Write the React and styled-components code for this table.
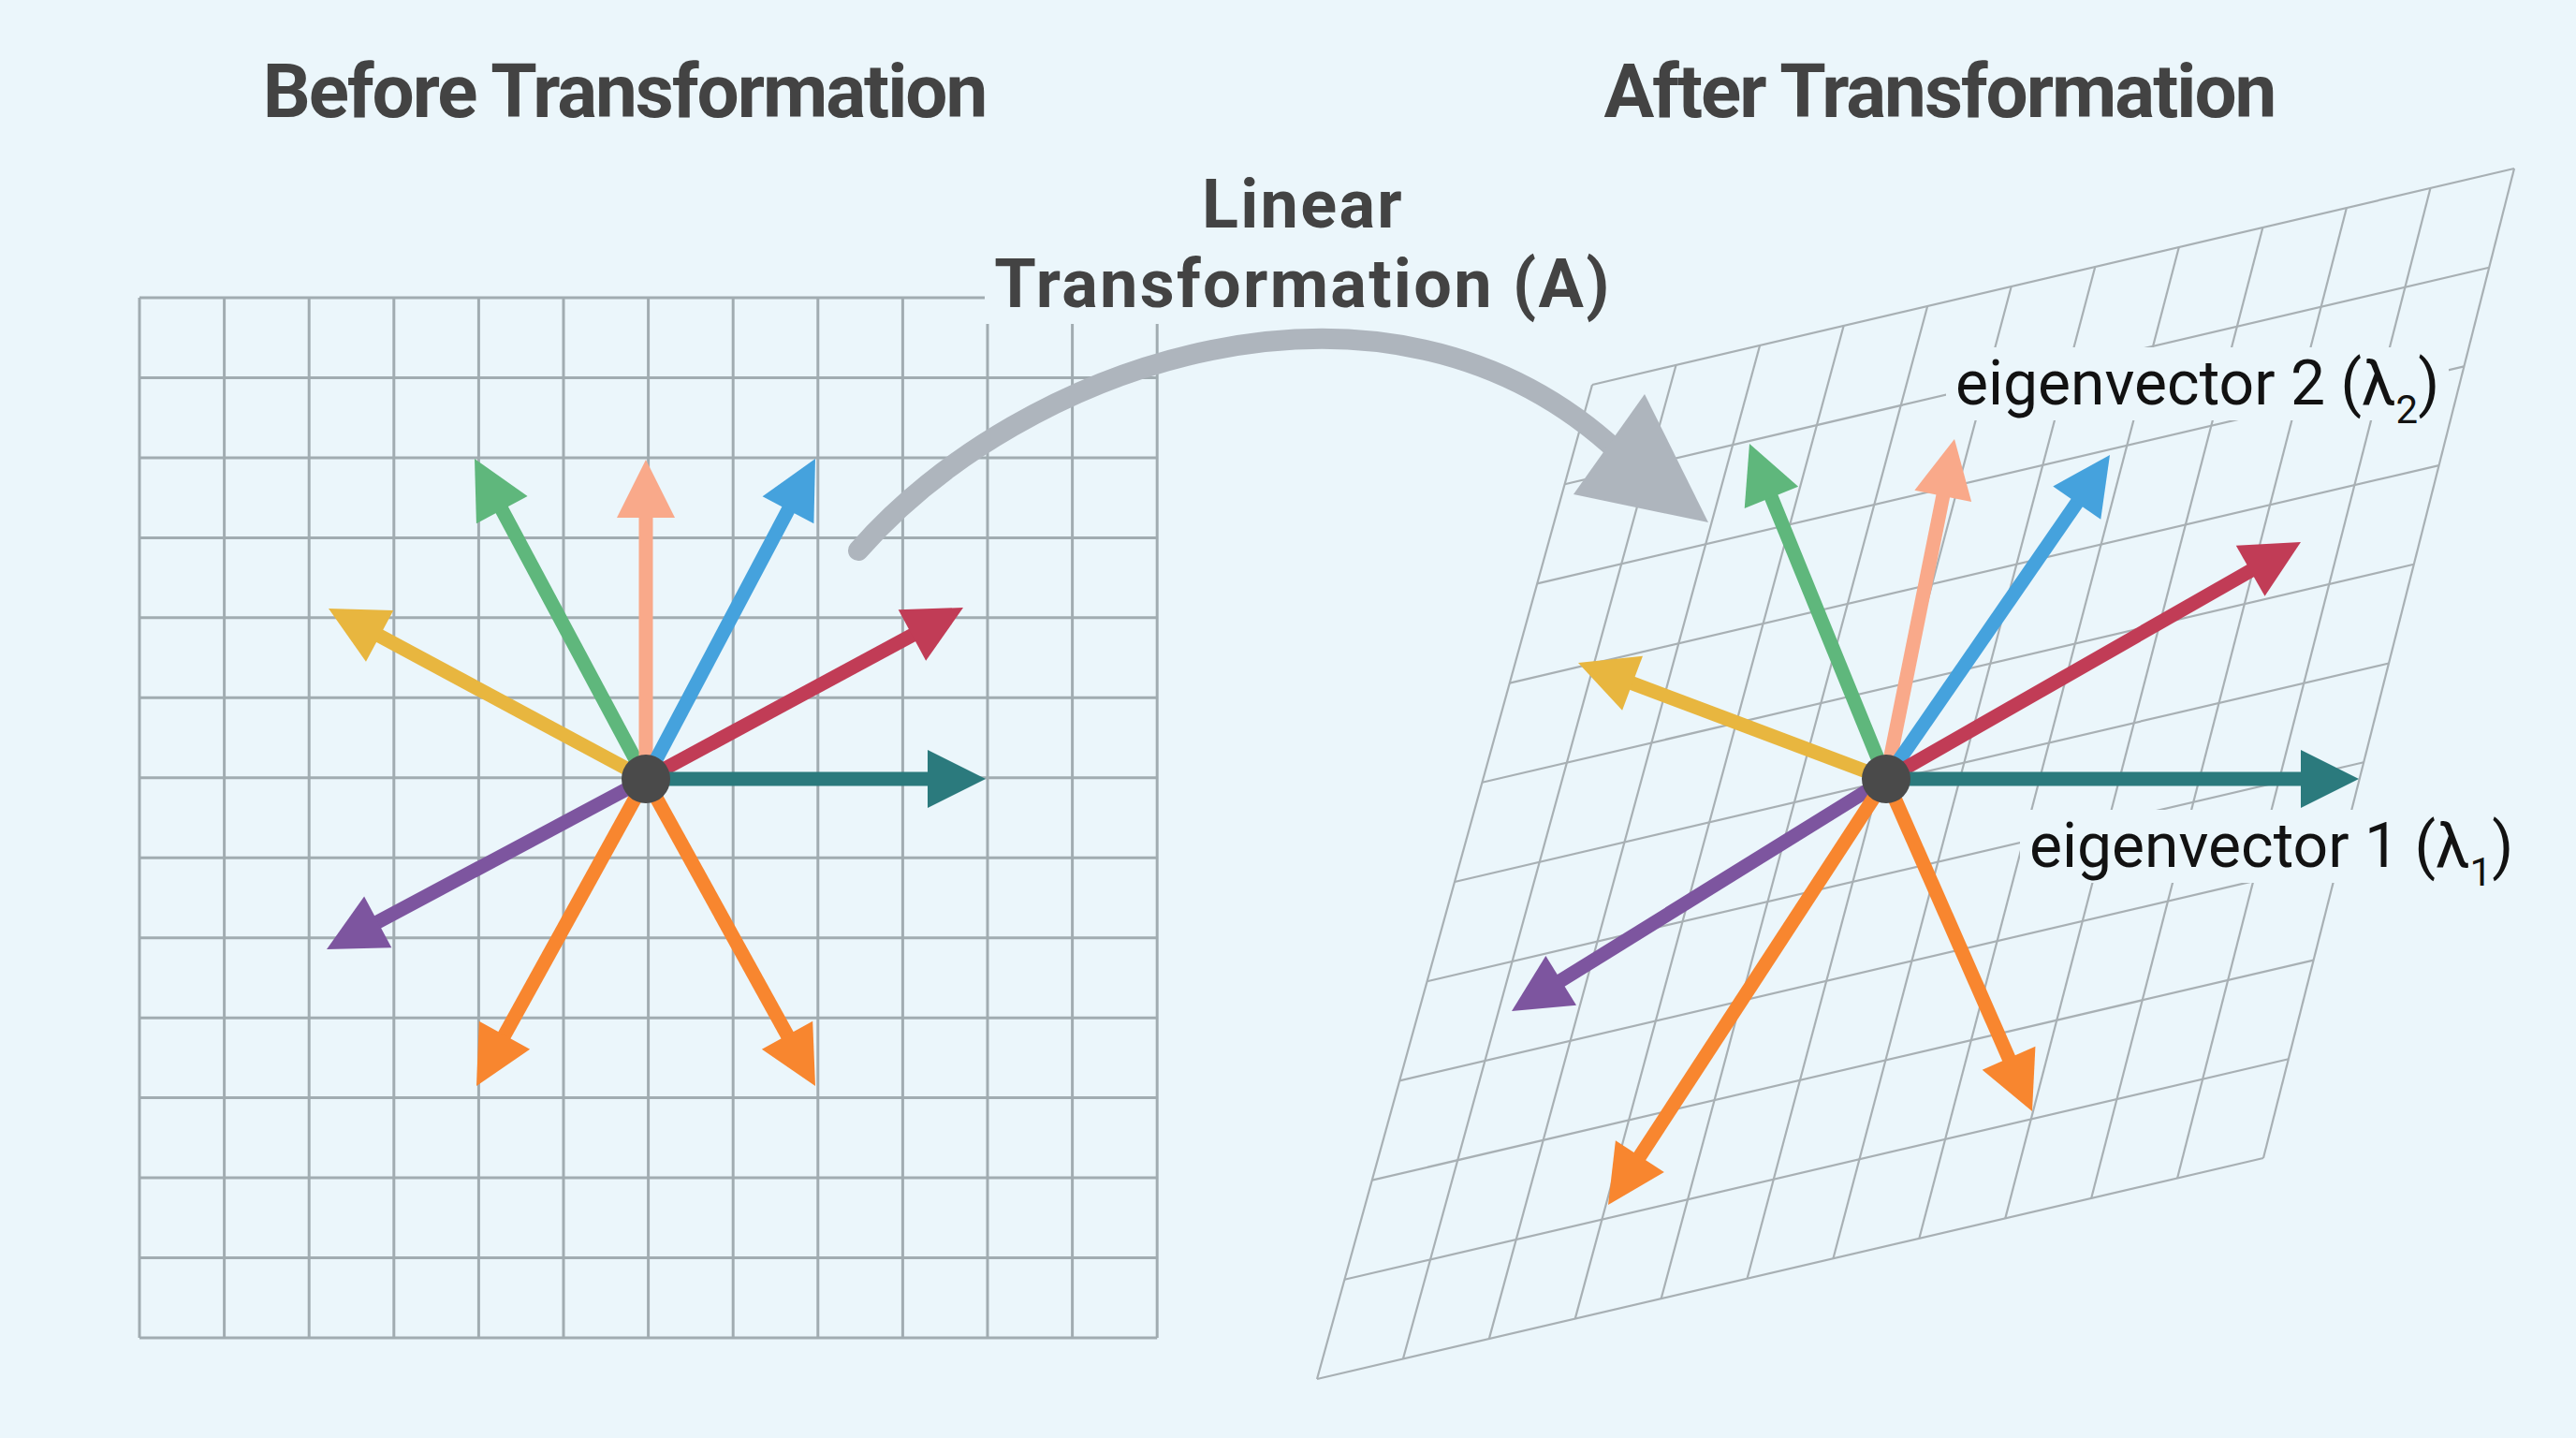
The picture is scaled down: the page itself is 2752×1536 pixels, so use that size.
import React from 'react'
import styled, { createGlobalStyle } from 'styled-components'

const BG = '#ebf6fb'
const TOP = 160

const GlobalStyle = createGlobalStyle`
  html, body {
    margin: 0;
    padding: 0;
    background: ${BG};
  }
  body {
    font-family: Roboto, 'Liberation Sans', sans-serif;
    overflow: hidden;
  }
`

const Page = styled.div`
  width: 2752px;
  height: 1536px;
  display: flex;
  flex-direction: column;
  background: ${BG};
`

const Header = styled.header`
  display: grid;
  grid-template-columns: 1334px 1fr;
  height: ${TOP}px;
  padding-top: 58px;
  box-sizing: border-box;
`

const Title = styled.h1`
  margin: 0;
  padding-left: ${p => p.$shift || 0}px;
  font-family: Roboto, 'Liberation Sans', sans-serif;
  font-size: 80px;
  line-height: 80px;
  font-weight: 700;
  letter-spacing: -2px;
  color: #434343;
  text-align: center;
`

const Canvas = styled.div`
  position: relative;
  flex: 1;
`

const Drawing = styled.svg`
  position: absolute;
  inset: 0;
  width: 100%;
  height: 100%;
  display: block;
`

const Caption = styled.div`
  position: absolute;
  left: ${p => p.$x}px;
  top: ${p => p.$y}px;
  width: 680px;
  background: ${BG};
  font-size: 72px;
  line-height: 85px;
  font-weight: 700;
  letter-spacing: 2.3px;
  color: #434343;
  text-align: center;
`

const EigenLabel = styled.div`
  position: absolute;
  left: ${p => p.$x}px;
  top: ${p => p.$y}px;
  padding: 6px 10px;
  background: ${BG};
  font-size: 66px;
  line-height: 66px;
  font-weight: 400;
  color: #121212;
  white-space: nowrap;
`

const Sub = styled.sub`
  font-size: 42px;
  line-height: 0;
  vertical-align: -20px;
`

// vectors measured in page pixels
const LEFT_C = [690, 832]
const RIGHT_C = [2015, 832]

const COLORS = {
  green: '#5fb77c',
  salmon: '#f9a98a',
  blue: '#45a2dd',
  yellow: '#e8b63f',
  red: '#c13c56',
  teal: '#2b7a7d',
  purple: '#7d559f',
  orange: '#f8862f',
}

const leftVectors = [
  ['yellow', [351, 650]],
  ['green', [507, 490]],
  ['salmon', [690, 491]],
  ['blue', [871, 490]],
  ['red', [1029, 649]],
  ['teal', [1053, 832]],
  ['purple', [349, 1014]],
  ['orange', [509, 1160]],
  ['orange', [871, 1160]],
]

const rightVectors = [
  ['yellow', [1686, 708]],
  ['green', [1869, 474]],
  ['salmon', [2088, 469]],
  ['blue', [2254, 486]],
  ['red', [2458, 579]],
  ['teal', [2520, 832]],
  ['purple', [1615, 1080]],
  ['orange', [1718, 1287]],
  ['orange', [2171, 1187]],
]

const Arrow = ({ from, to, color, width = 15, head = 62, half = 31 }) => {
  const dx = to[0] - from[0]
  const dy = to[1] - from[1]
  const len = Math.hypot(dx, dy)
  const ux = dx / len
  const uy = dy / len
  const bx = to[0] - ux * head
  const by = to[1] - uy * head
  const px = -uy
  const py = ux
  const pts = `${to[0]},${to[1]} ${bx + px * half},${by + py * half} ${bx - px * half},${by - py * half}`
  return (
    <g>
      <line x1={from[0]} y1={from[1]} x2={bx + ux * 4} y2={by + uy * 4} stroke={color} strokeWidth={width} />
      <polygon points={pts} fill={color} />
    </g>
  )
}

const FlatGrid = () => {
  const x0 = 149
  const y0 = 318
  const dx = 90.6
  const dy = 85.46
  const x1 = x0 + dx * 12
  const y1 = y0 + dy * 13
  const lines = []
  for (let i = 0; i <= 12; i++) {
    lines.push(<line key={'v' + i} x1={x0 + i * dx} y1={y0} x2={x0 + i * dx} y2={y1} />)
  }
  for (let j = 0; j <= 13; j++) {
    lines.push(<line key={'h' + j} x1={x0} y1={y0 + j * dy} x2={x1} y2={y0 + j * dy} />)
  }
  return <g stroke="#a1acb1" strokeWidth="3">{lines}</g>
}

const SkewGrid = () => {
  const TL = [1701, 411]
  const TR = [2686, 180]
  const BR = [2418, 1237]
  const BL = [1407, 1473]
  const at = (a, b) => [
    (1 - a) * (1 - b) * TL[0] + a * (1 - b) * TR[0] + a * b * BR[0] + (1 - a) * b * BL[0],
    (1 - a) * (1 - b) * TL[1] + a * (1 - b) * TR[1] + a * b * BR[1] + (1 - a) * b * BL[1],
  ]
  const lines = []
  for (let i = 0; i <= 11; i++) {
    const p = at(i / 11, 0)
    const q = at(i / 11, 1)
    lines.push(<line key={'v' + i} x1={p[0]} y1={p[1]} x2={q[0]} y2={q[1]} />)
  }
  for (let j = 0; j <= 10; j++) {
    const p = at(0, j / 10)
    const q = at(1, j / 10)
    lines.push(<line key={'h' + j} x1={p[0]} y1={p[1]} x2={q[0]} y2={q[1]} />)
  }
  return <g stroke="#a8b0b4" strokeWidth="2.2">{lines}</g>
}

const Bend = () => (
  <g>
    <path
      d="M 917 588 C 1090 390, 1480 250, 1730 484"
      fill="none"
      stroke="#aeb5bd"
      strokeWidth="22"
      strokeLinecap="round"
    />
    <polygon points="1825,558 1757,421 1681,528" fill="#aeb5bd" />
  </g>
)

const Star = ({ center, vectors }) => (
  <g>
    {vectors.map(([c, tip], i) => (
      <Arrow key={i} from={center} to={tip} color={COLORS[c]} />
    ))}
    <circle cx={center[0]} cy={center[1]} r="26" fill="#4a4a4a" />
  </g>
)

export default function App() {
  return (
    <>
      <GlobalStyle />
      <Page>
        <Header>
          <Title>Before Transformation</Title>
          <Title $shift={58}>After Transformation</Title>
        </Header>
        <Canvas>
          <Drawing viewBox={`0 ${TOP} 2752 ${1536 - TOP}`} preserveAspectRatio="none">
            <FlatGrid />
            <SkewGrid />
            <Bend />
            <Star center={LEFT_C} vectors={leftVectors} />
            <Star center={RIGHT_C} vectors={rightVectors} />
          </Drawing>
          <Caption $x={1052} $y={176 - TOP}>
            Linear
            <br />
            Transformation (A)
          </Caption>
          <EigenLabel $x={2079} $y={371 - TOP}>
            eigenvector 2 (λ<Sub>2</Sub>)
          </EigenLabel>
          <EigenLabel $x={2158} $y={865 - TOP}>
            eigenvector 1 (λ<Sub>1</Sub>)
          </EigenLabel>
        </Canvas>
      </Page>
    </>
  )
}
